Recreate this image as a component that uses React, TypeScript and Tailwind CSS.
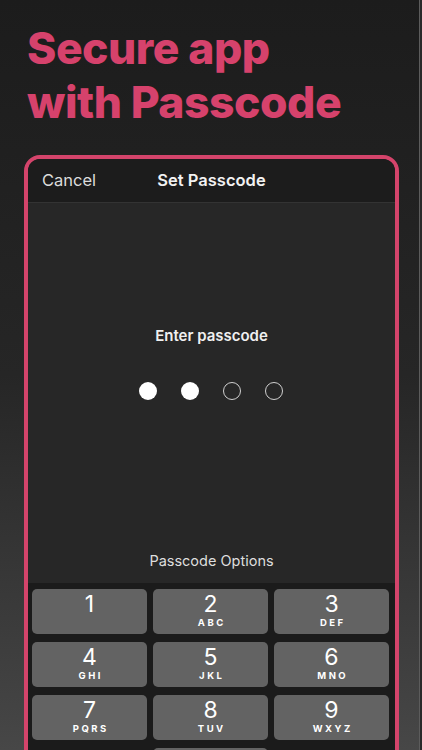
import React from 'react';

const keys = [
  { d: '1', l: '' },
  { d: '2', l: 'ABC' },
  { d: '3', l: 'DEF' },
  { d: '4', l: 'GHI' },
  { d: '5', l: 'JKL' },
  { d: '6', l: 'MNO' },
  { d: '7', l: 'PQRS' },
  { d: '8', l: 'TUV' },
  { d: '9', l: 'WXYZ' },
  { d: '', l: '' },
  { d: '0', l: '' },
  { d: '', l: '' },
];

const Dot: React.FC<{ filled: boolean }> = ({ filled }) =>
  filled ? (
    <div className="w-[18px] h-[18px] rounded-full bg-white" />
  ) : (
    <div className="w-[18px] h-[18px] rounded-full border-[1.5px] border-[#d0d0d0]" />
  );

export default function App() {
  return (
    <div className="flex w-full h-[750px] overflow-hidden" style={{ fontFamily: 'Inter, "Noto Sans", sans-serif' }}>
      <div className="flex-1 h-full bg-gradient-to-b from-[#1c1c1c] via-[#262626] to-[#474747] border-r border-[#5c5c5c]">
        <h1 className="pt-[21px] pl-[27px] text-[44.5px] leading-[54px] font-extrabold text-[#d6426c] tracking-[-0.5px]">
          Secure app
          <br />
          with Passcode
        </h1>

        <div className="mt-[26px] ml-[24px] w-[375px] h-[640px] border-4 border-[#d4446b] rounded-t-[16px] overflow-hidden">
          <div className="relative h-[44px] bg-[#1c1c1c] border-b border-[#333] flex items-center justify-center">
            <span className="absolute left-[14px] text-[16.5px] text-[#dcdcdc]">Cancel</span>
            <span className="text-[16.5px] font-semibold text-[#f2f2f2]">Set Passcode</span>
          </div>

          <div className="h-[380px] bg-[#272727] flex flex-col items-center">
            <div className="mt-[123px] text-[15px] leading-[20px] font-semibold text-[#f0f0f0]">Enter passcode</div>
            <div className="mt-[36px] flex gap-[24px] -ml-[2px]">
              <Dot filled />
              <Dot filled />
              <Dot filled={false} />
              <Dot filled={false} />
            </div>
            <div className="mt-[151px] text-[14.5px] leading-[20px] text-[#dedede]">Passcode Options</div>
          </div>

          <div className="bg-[#1b1b1b] pt-[6px] pl-[4px] pr-[6px] pb-[10px] grid grid-cols-3 gap-x-[6px] gap-y-[8px]">
            {keys.map((k, i) => (
              <div
                key={i}
                className={`h-[45px] rounded-[5px] flex flex-col items-center pt-[3px] ${k.d ? 'bg-[#636363]' : ''}`}
              >
                <span className="text-[23px] leading-[25px] text-white">{k.d}</span>
                <span className="text-[9.5px] leading-[12px] font-bold tracking-[2.5px] pl-[2.5px] text-white">{k.l}</span>
              </div>
            ))}
          </div>
        </div>
      </div>
      <div className="w-[2px] h-full bg-[#2a2a2a]" />
    </div>
  );
}
